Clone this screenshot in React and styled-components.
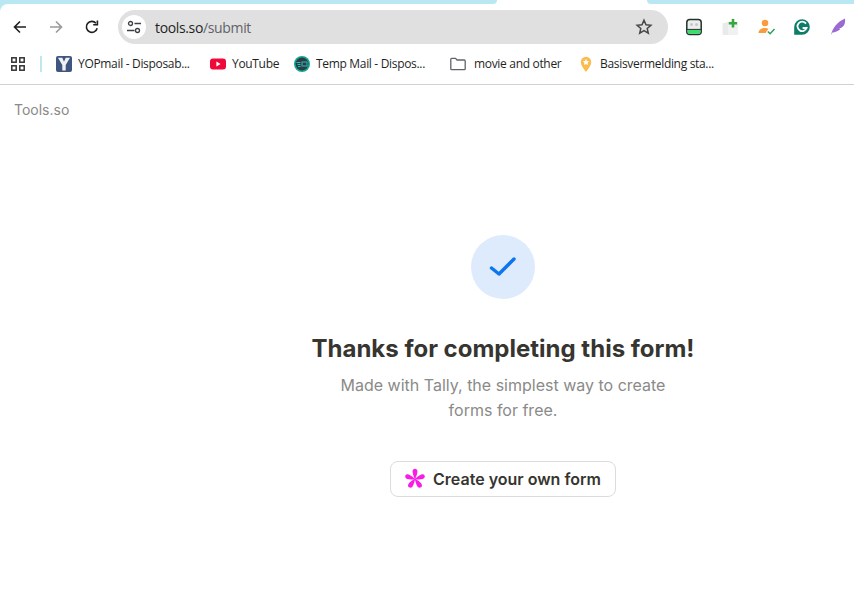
import styled, { createGlobalStyle } from "styled-components";

const GlobalStyle = createGlobalStyle`
  html, body {
    margin: 0;
    padding: 0;
    background: #fff;
    overflow: hidden;
  }
`;

const Page = styled.div`
  width: 854px;
  height: 610px;
  display: flex;
  flex-direction: column;
  background: #fff;
`;

/* browser chrome */
const ChromeTop = styled.div`
  background: #b9e8f3;
`;

const TabStrip = styled.div`
  height: 4px;
  display: flex;
  background: #fff;
`;

const TabShape = styled.div`
  height: 4px;
  background: #b9e8f3;
  width: ${(p) => p.$width}px;
  margin-left: ${(p) => p.$offset || 0}px;
  border-radius: ${(p) => p.$radius};
`;

const Toolbar = styled.div`
  height: 40px;
  box-sizing: border-box;
  padding-top: 6px;
  display: flex;
  align-items: center;
  background: #fff;
  border-radius: 8px 0 0 0;
`;

const NavButton = styled.button`
  width: 20px;
  height: 20px;
  margin-left: ${(p) => p.$gap}px;
  padding: 0;
  border: 0;
  background: none;
  display: flex;
  align-items: center;
  justify-content: center;
`;

const Omnibox = styled.div`
  width: 550px;
  height: 34px;
  margin-left: 16px;
  border-radius: 17px;
  background: #e0e0e0;
  display: flex;
  align-items: center;
  padding: 0 15px 0 4px;
  box-sizing: border-box;
`;

const SiteBadge = styled.div`
  width: 24px;
  height: 24px;
  border-radius: 50%;
  background: #fff;
  display: flex;
  align-items: center;
  justify-content: center;
  margin-right: 9px;
`;

const Url = styled.div`
  flex: 1;
  font: 14px "Open Sans", "Noto Sans", sans-serif;
  letter-spacing: -0.35px;
  color: #1f1f1f;
  span {
    color: #5f6368;
  }
`;

const Extensions = styled.div`
  display: flex;
  align-items: center;
  margin-left: 16px;
  gap: 16px;
`;

const ExtensionIcon = styled.svg`
  width: 20px;
  height: 20px;
  flex: none;
`;

const BookmarksBar = styled.div`
  height: 40px;
  display: flex;
  align-items: center;
  border-bottom: 1px solid #d0d0d0;
  padding-left: 11px;
`;

const Separator = styled.div`
  width: 2px;
  height: 16px;
  margin: 0 14px 0 15px;
  background: #bfe6f1;
`;

const Bookmark = styled.div`
  display: flex;
  align-items: center;
  gap: 6px;
  width: ${(p) => p.$width}px;
  flex: none;
  svg {
    flex: none;
  }
`;

const BookmarkLabel = styled.span`
  padding-bottom: 2px;
  font: 12px "Open Sans", "Noto Sans", sans-serif;
  letter-spacing: -0.32px;
  color: #1f1f1f;
  white-space: nowrap;
`;

/* form page */
const Content = styled.main`
  flex: 1;
  display: flex;
  flex-direction: column;
  font-family: Inter, "Liberation Sans", sans-serif;
`;

const Brand = styled.div`
  margin: 16px 0 0 14px;
  font-size: 14px;
  line-height: 17px;
  color: #8a8a88;
`;

const ThankYou = styled.section`
  margin-top: 117px;
  padding-left: 152px;
  display: flex;
  flex-direction: column;
  align-items: center;
`;

const CheckCircle = styled.div`
  width: 64px;
  height: 64px;
  border-radius: 50%;
  background: #deebfc;
  display: flex;
  align-items: center;
  justify-content: center;
`;

const Title = styled.h1`
  margin: 35px 0 0;
  font-size: 24px;
  line-height: 30px;
  font-weight: 700;
  color: #37352f;
`;

const Subtitle = styled.p`
  margin: 9px 0 0;
  width: 340px;
  text-align: center;
  font-size: 16px;
  line-height: 25px;
  color: #8a8a88;
`;

const CreateButton = styled.a`
  margin-top: 38px;
  width: 226px;
  height: 36px;
  box-sizing: border-box;
  padding-right: 1px;
  border: 1px solid #dcdcdc;
  border-radius: 8px;
  background: #fff;
  display: flex;
  align-items: center;
  justify-content: center;
  gap: 7px;
  font-size: 16px;
  font-weight: 600;
  color: #37352f;
`;

const marks = [
  { width: 154, label: "YOPmail - Disposab...", icon: "yop" },
  { width: 84, label: "YouTube", icon: "yt" },
  { width: 156, label: "Temp Mail - Dispos...", icon: "temp" },
  { width: 128, label: "movie and other", icon: "folder" },
  { width: 150, label: "Basisvermelding sta...", icon: "pin" },
];

const petal = "M11 11.500C9.700 8.500 8.600 5.500 8.600 3.500 8.600 1.800 9.600.8 11 .8s2.400 1 2.400 2.700C13.400 5.500 12.300 8.500 11 11.500z";

function BookmarkIcon({ kind }) {
  if (kind === "yop") {
    return (
      <svg width="16" height="16" viewBox="0 0 16 16">
        <rect width="16" height="16" rx="2" fill="#3f5680" />
        <path d="M2 1.800h4.300L8 5.800l1.700-4h4.300L9.700 9v5.500H6.300V9z" fill="#f2f2f2" />
      </svg>
    );
  }
  if (kind === "yt") {
    return (
      <svg width="16" height="16" viewBox="0 0 16 16">
        <rect y="2.500" width="16" height="11" rx="3" fill="#f0083a" />
        <path d="M6.400 5.600 10.600 8l-4.200 2.400z" fill="#fff" />
      </svg>
    );
  }
  if (kind === "temp") {
    return (
      <svg width="16" height="16" viewBox="0 0 16 16">
        <circle cx="8" cy="8" r="8" fill="#12a594" />
        <circle cx="8" cy="8" r="6.400" fill="#2f3b46" />
        <path d="M2.500 6.500h4M3.500 8.500h3M4 10.500h2.500" stroke="#22c3b0" strokeWidth="1" />
        <rect x="8" y="6" width="5" height="4" fill="none" stroke="#22c3b0" strokeWidth="1" />
      </svg>
    );
  }
  if (kind === "folder") {
    return (
      <svg width="18" height="16" viewBox="0 0 18 16" fill="none">
        <path
          d="M.8 3.200c0-.5.4-.9.9-.9h3.800l1.600 1.700h7.200c.5 0 .9.400.9.900v7.900c0 .5-.4.900-.9.900H1.700c-.5 0-.9-.4-.9-.9z"
          stroke="#5f6368"
          strokeWidth="1.300"
        />
      </svg>
    );
  }
  return (
    <svg width="16" height="16" viewBox="0 0 16 16">
      <path d="M8 16C5.500 12.500 2.800 9.600 2.800 6a5.200 5.200 0 0 1 10.400 0c0 3.600-2.700 6.500-5.200 10z" fill="#fbbc4e" />
      <path d="m8 2.800 1 2.100 2.200.3-1.600 1.500.4 2.200-2-1-2 1 .4-2.200-1.600-1.500L7 4.900z" fill="#fff" />
    </svg>
  );
}

export default function App() {
  return (
    <Page>
      <GlobalStyle />
      <ChromeTop>
        <TabStrip>
          <TabShape $width={497} $radius="0 0 10px 0" />
          <TabShape $width={207} $offset={150} $radius="0 0 0 10px" />
        </TabStrip>
        <Toolbar>
          <NavButton $gap={10}>
            <svg width="16" height="16" viewBox="0 0 16 16" fill="none" stroke="#1f1f1f" strokeWidth="1.600">
              <path d="M14 8H2.500M8 2.500 2.500 8 8 13.500" />
            </svg>
          </NavButton>
          <NavButton $gap={16}>
            <svg width="16" height="16" viewBox="0 0 16 16" fill="none" stroke="#9a9a9a" strokeWidth="1.600">
              <path d="M2 8h11.500M8 2.500 13.500 8 8 13.500" />
            </svg>
          </NavButton>
          <NavButton $gap={16}>
            <svg width="16" height="16" viewBox="0 0 16 16" fill="none" stroke="#1f1f1f" strokeWidth="1.600">
              <path d="M13.200 9.300A5.500 5.500 0 1 1 12 4.200" />
              <path d="M13.400 1.600v4.200H9.200" />
            </svg>
          </NavButton>
          <Omnibox>
            <SiteBadge>
              <svg width="16" height="16" viewBox="0 0 16 16" fill="none" stroke="#3c4043" strokeWidth="1.300">
                <circle cx="4.500" cy="4.500" r="2" />
                <path d="M8.500 4.500H15M1 11.500h7.500" />
                <circle cx="11.500" cy="11.500" r="2" />
              </svg>
            </SiteBadge>
            <Url>
              tools.so<span>/submit</span>
            </Url>
            <svg width="18" height="18" viewBox="0 0 18 18" fill="none" stroke="#474747" strokeWidth="1.500">
              <path d="m9 2.200 2 4.500 4.900.5-3.700 3.200 1.100 4.800L9 12.700l-4.300 2.500 1.100-4.800-3.700-3.200L7 6.700z" />
            </svg>
          </Omnibox>
          <Extensions>
            <ExtensionIcon viewBox="0 0 20 20">
              <rect x="2.800" y="2.500" width="14.400" height="15" rx="3" fill="#eceeee" stroke="#26302d" strokeWidth="1.500" />
              <rect x="3.500" y="12.800" width="13" height="3.900" rx="1" fill="#3ddc68" />
              <path d="M2.800 12.400h14.400" stroke="#26302d" strokeWidth="1" />
              <circle cx="7.500" cy="7.500" r="1.500" fill="#c4c8c8" />
              <circle cx="12.500" cy="7.500" r="1.500" fill="#c4c8c8" />
            </ExtensionIcon>
            <ExtensionIcon viewBox="0 0 20 20">
              <path d="M2.500 6.500 11 4v14H4a1.500 1.500 0 0 1-1.500-1.500z" fill="#e9eaea" />
              <rect x="8" y="7" width="10" height="11" rx="1" fill="#f1f1f1" />
              <path d="M13 2v8.500M8.800 6.200h8.400" stroke="#37a63c" strokeWidth="2.600" />
            </ExtensionIcon>
            <ExtensionIcon viewBox="0 0 20 20">
              <circle cx="9" cy="6" r="3.300" fill="#fb9b3e" />
              <path d="M2.500 16c0-3.300 3-5 6.500-5 1.400 0 2.500.3 3.500.8L9.600 16z" fill="#fb9b3e" />
              <path d="m11.800 14.500 2.300 2.200 4.400-4.700" fill="none" stroke="#2f9e5f" strokeWidth="1.500" />
            </ExtensionIcon>
            <ExtensionIcon viewBox="0 0 20 20">
              <path d="M10 2.200a7.800 7.800 0 1 1 0 15.600H2.200V10A7.800 7.800 0 0 1 10 2.200z" fill="#0d7d68" />
              <path d="M14 6.600A4.700 4.700 0 1 0 14.600 11H10.600" fill="none" stroke="#fff" strokeWidth="1.800" />
            </ExtensionIcon>
            <ExtensionIcon viewBox="0 0 20 20">
              <path d="M3 18C4.500 11 9 5 17 1.500c.6 5-1 8-4 9.500l-2 .1 1.400 1C10 14.500 7 15.500 4.500 15.500z" fill="#9b6bd3" />
            </ExtensionIcon>
          </Extensions>
        </Toolbar>
      </ChromeTop>
      <BookmarksBar>
        <svg width="14" height="14" viewBox="0 0 14 14" fill="none" stroke="#333" strokeWidth="1.500">
          <rect x=".8" y=".8" width="4.400" height="4.400" />
          <rect x="8.800" y=".8" width="4.400" height="4.400" />
          <rect x=".8" y="8.800" width="4.400" height="4.400" />
          <rect x="8.800" y="8.800" width="4.400" height="4.400" />
        </svg>
        <Separator />
        {marks.map((mark) => (
          <Bookmark key={mark.label} $width={mark.width}>
            <BookmarkIcon kind={mark.icon} />
            <BookmarkLabel>{mark.label}</BookmarkLabel>
          </Bookmark>
        ))}
      </BookmarksBar>
      <Content>
        <Brand>Tools.so</Brand>
        <ThankYou>
          <CheckCircle>
            <svg width="28" height="28" viewBox="0 0 28 28" fill="none" stroke="#0b76f0" strokeWidth="3.400" strokeLinecap="round" strokeLinejoin="round">
              <path d="M2.500 15 10 21 25 6" />
            </svg>
          </CheckCircle>
          <Title>Thanks for completing this form!</Title>
          <Subtitle>Made with Tally, the simplest way to create forms for free.</Subtitle>
          <CreateButton>
            <svg width="22" height="22" viewBox="0 0 22 22" fill="#f81ce5">
              <path d={petal} />
              <path d={petal} transform="rotate(72 11 11)" />
              <path d={petal} transform="rotate(144 11 11)" />
              <path d={petal} transform="rotate(216 11 11)" />
              <path d={petal} transform="rotate(288 11 11)" />
            </svg>
            Create your own form
          </CreateButton>
        </ThankYou>
      </Content>
    </Page>
  );
}
